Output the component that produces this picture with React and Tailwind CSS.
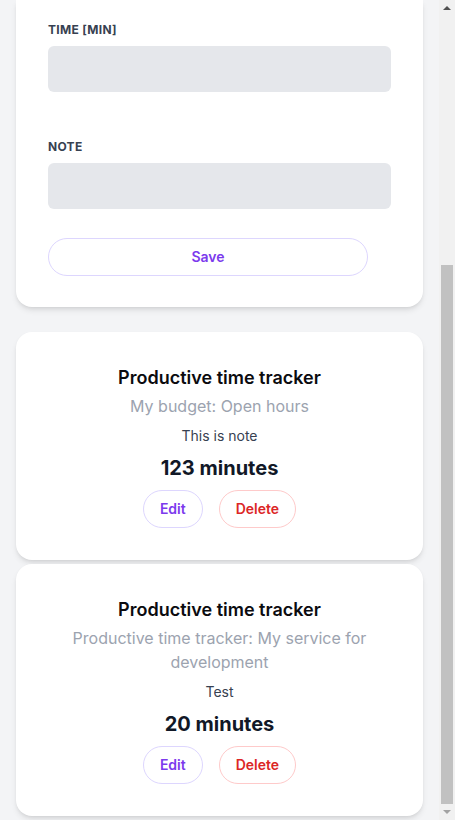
const entries = [
  { id: 1, title: 'Productive time tracker', budget: 'My budget: Open hours', note: 'This is note', minutes: 123 },
  { id: 2, title: 'Productive time tracker', budget: 'Productive time tracker: My service for development', note: 'Test', minutes: 20 },
];

function Field({ label, className = '' }) {
  return (
    <div className={className}>
      <label className="block text-xs leading-4 font-bold uppercase tracking-wide text-[#374151]">{label}</label>
      <div className="mt-2 h-[46px] w-full rounded-md bg-[#e5e7eb]" />
    </div>
  );
}

function EntryCard({ entry }) {
  return (
    <div className="rounded-2xl bg-white p-8 text-center shadow-md">
      <h3 className="text-lg leading-7 font-semibold text-[#0b0b0f]">{entry.title}</h3>
      <p className="mt-0.5 text-base leading-6 text-[#9ca3af]">{entry.budget}</p>
      <p className="mt-2 text-sm leading-5 text-[#374151]">{entry.note}</p>
      <p className="mt-2 text-xl leading-7 font-bold text-[#111827]">{entry.minutes} minutes</p>
      <div className="mt-2 flex justify-center gap-4">
        <button className="h-[38px] rounded-full border border-[#ddd6fe] px-4 text-sm font-semibold text-[#7c3aed]">Edit</button>
        <button className="h-[38px] rounded-full border border-[#fecaca] px-4 text-sm font-semibold text-[#dc2626]">Delete</button>
      </div>
    </div>
  );
}

function Scrollbar() {
  return (
    <div className="flex h-full w-[16px] shrink-0 flex-col bg-[#f1f1f1]">
      <div className="flex h-[16px] items-center justify-center">
        <div className="h-0 w-0 border-x-[4px] border-b-[4px] border-x-transparent border-b-[#505050]" />
      </div>
      <div className="flex flex-1 flex-col justify-end px-[2px]">
        <div className="h-[539px] bg-[#c1c1c1]" />
      </div>
      <div className="flex h-[16px] items-center justify-center">
        <div className="h-0 w-0 border-x-[4px] border-t-[4px] border-x-transparent border-t-[#a3a3a3]" />
      </div>
    </div>
  );
}

export default function App() {
  return (
    <div className="flex h-[820px] w-full overflow-hidden bg-[#f3f4f6]" style={{ fontFamily: 'Inter, "Noto Sans", sans-serif' }}>
      <main className="flex-1 px-4">
        <form className="rounded-b-2xl bg-white px-8 pt-[22px] pb-[31px] shadow-md">
          <Field label="Time [min]" />
          <Field label="Note" className="mt-[47px]" />
          <button type="button" className="mt-[29px] h-[38px] w-full max-w-xs rounded-full border border-[#ddd6fe] text-sm font-semibold text-[#7c3aed]">
            Save
          </button>
        </form>
        <div className="mt-[25px] flex flex-col gap-1">
          {entries.map((e) => (
            <EntryCard key={e.id} entry={e} />
          ))}
        </div>
      </main>
      <Scrollbar />
    </div>
  );
}
